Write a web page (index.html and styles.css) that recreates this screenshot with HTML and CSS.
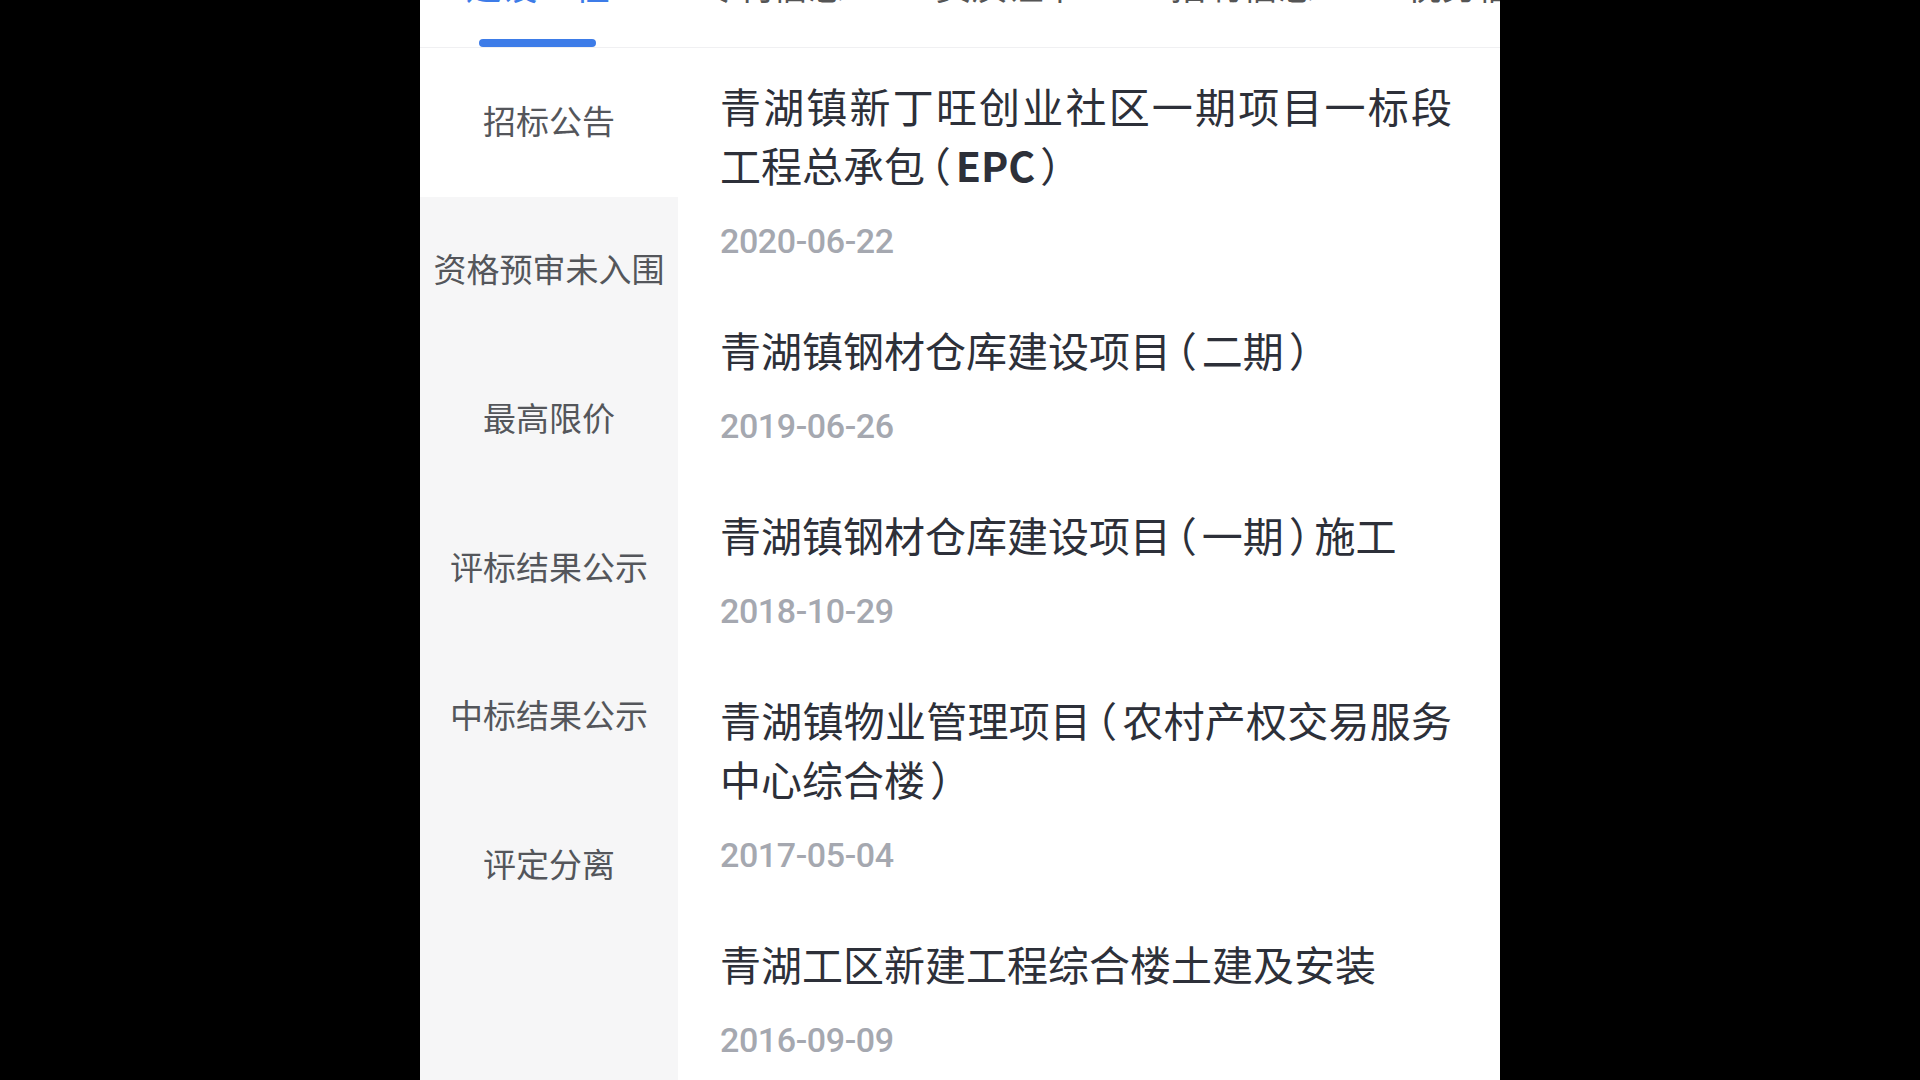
FILE: index.html
```html
<!DOCTYPE html>
<html lang="zh-CN">
<head>
  <meta charset="utf-8">
  <title>招投标</title>
  <link rel="stylesheet" href="styles.css">
</head>
<body>
  <div class="panel">
    <div class="tabs">
      <div class="tab active"><span class="tab-label">建设工程</span><span class="tab-bar"></span></div>
      <div class="tab"><span class="tab-label">专利信息</span><span class="tab-bar"></span></div>
      <div class="tab"><span class="tab-label">资质证书</span><span class="tab-bar"></span></div>
      <div class="tab"><span class="tab-label">招聘信息</span><span class="tab-bar"></span></div>
      <div class="tab"><span class="tab-label">税务信息</span><span class="tab-bar"></span></div>
    </div>

    <div class="body">
      <ul class="side">
        <li class="side-item current">招标公告</li>
        <li class="side-item">资格预审未入围</li>
        <li class="side-item">最高限价</li>
        <li class="side-item">评标结果公示</li>
        <li class="side-item">中标结果公示</li>
        <li class="side-item">评定分离</li>
      </ul>

      <ul class="list">
        <li class="item">
          <div class="title">青湖镇新丁旺创业社区一期项目一标段工程总承包<span class="par">（</span><b>EPC</b><span class="par">）</span></div>
          <div class="date">2020-06-22</div>
        </li>
        <li class="item">
          <div class="title">青湖镇钢材仓库建设项目<span class="par">（</span>二期<span class="par">）</span></div>
          <div class="date">2019-06-26</div>
        </li>
        <li class="item">
          <div class="title">青湖镇钢材仓库建设项目<span class="par">（</span>一期<span class="par">）</span>施工</div>
          <div class="date">2018-10-29</div>
        </li>
        <li class="item">
          <div class="title">青湖镇物业管理项目<span class="par">（</span>农村产权交易服务中心综合楼<span class="par">）</span></div>
          <div class="date">2017-05-04</div>
        </li>
        <li class="item">
          <div class="title">青湖工区新建工程综合楼土建及安装</div>
          <div class="date">2016-09-09</div>
        </li>
      </ul>
    </div>
  </div>
</body>
</html>
```

FILE: styles.css
```css
html, body {
  margin: 0;
  height: 100%;
}
body {
  background: #000;
  display: flex;
  justify-content: center;
  overflow: hidden;
  font-family: "Noto Sans CJK SC", sans-serif;
}

.panel {
  width: 1080px;
  height: 1080px;
  background: #fff;
  display: flex;
  flex-direction: column;
  overflow: hidden;
}

/* tab strip, scrolled so only the bottom of the labels shows */
.tabs {
  display: flex;
  height: 48px;
  box-sizing: border-box;
  border-bottom: 1px solid #f0f0f2;
  overflow: hidden;
  flex: none;
}
.tab {
  flex: none;
  width: 235px;
  display: flex;
  flex-direction: column;
  align-items: center;
}
.tab-label {
  margin-top: -36px;
  font-size: 36px;
  line-height: 40px;
  color: #555;
  white-space: nowrap;
}
.tab-bar {
  margin-top: auto;
  width: 117px;
  height: 8px;
  border-radius: 4px;
}
.tab.active .tab-label { color: #3d7ce8; }
.tab.active .tab-bar { background: #3d7ce8; }

.body {
  flex: 1;
  display: flex;
  min-height: 0;
}

.side {
  list-style: none;
  margin: 0;
  padding: 0;
  width: 258px;
  flex: none;
  background: #f6f6f7;
}
.side-item {
  height: 148.6px;
  box-sizing: border-box;
  padding-bottom: 5px;
  display: flex;
  align-items: center;
  justify-content: center;
  font-size: 33px;
  color: #54565b;
}
.side-item.current { background: #fff; }

.list {
  list-style: none;
  margin: 0;
  padding: 0 48px 0 42px;
  width: 732px;
}
.item {
  padding: 28px 0 31px;
}
.title {
  font-size: 41px;
  line-height: 59px;
  color: #2d3039;
  text-align: justify;
}
.title b { font-weight: 700; }
.par {
  font-feature-settings: "halt";
  margin: 0 0.125em;
}
.date {
  margin-top: 27px;
  font-family: Roboto, sans-serif;
  font-weight: 500;
  font-size: 34px;
  letter-spacing: -0.4px;
  line-height: 40px;
  color: #a5a8b0;
}
```
